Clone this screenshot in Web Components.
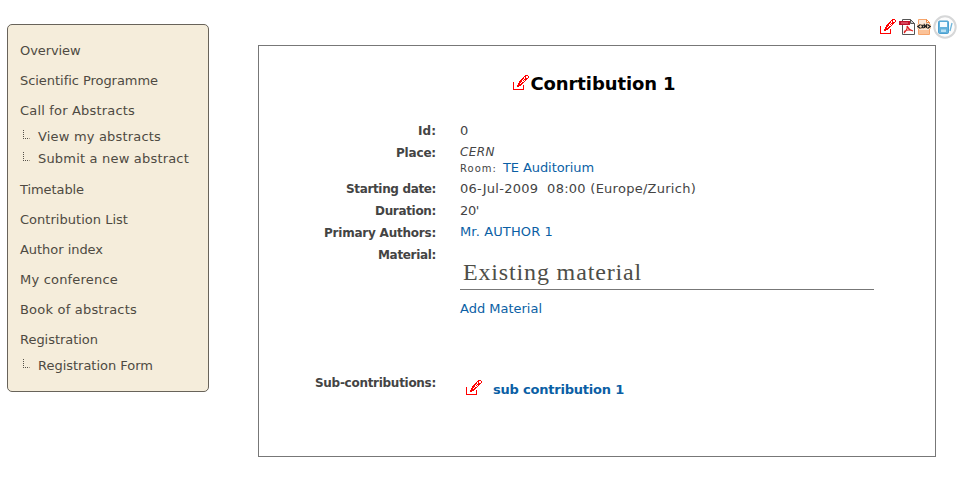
<!DOCTYPE html>
<html lang="en"><head><meta charset="utf-8"><title>Contribution</title>
<style>
html,body{margin:0;background:#fff}
body{width:962px;height:481px;overflow:hidden;font-family:"DejaVu Sans",sans-serif;font-size:13px;color:#444}
</style></head><body>
<conference-page></conference-page>
<script>
const define = (name, html, init) => customElements.define(name, class extends HTMLElement {
  connectedCallback() {
    if (this.shadowRoot) return;
    this.attachShadow({mode: 'open'}).innerHTML = html;
    if (init) init(this, this.shadowRoot);
  }
});

/* Text run whose letter spacing is adjusted to span a given width. */
define('fit-text', `<style>:host{display:inline-block;white-space:pre;font-variant-ligatures:none}span{display:inline-block}</style><span><slot></slot></span>`, (el, root) => {
  const s = root.querySelector('span'), w = +el.getAttribute('w'), n = el.textContent.length;
  s.style.letterSpacing = (w - s.getBoundingClientRect().width) / n + 'px';
});

define('edit-icon', `<style>:host{display:inline-block;width:16px;height:16px}svg{display:block}</style>
<svg width="16" height="16" viewBox="0 0 16 16" shape-rendering="crispEdges" fill="#f00">
<path d="M0 7h1v8H0zM0 14h11v1H0zM10 10h1v5h-1z"/>
<path d="M12 0h3v1h-3zM11 1h2v1h-2zM15 1h1v2h-1zM10 2h1v1h-1zM12 2h1v1h-1zM9 3h2v1H9zM12 3h3v1h-3zM8 4h2v1H8zM11 4h3v1h-3zM7 5h2v1H7zM10 5h1v1h-1zM12 5h1v1h-1zM6 6h3v1H6zM11 6h1v1h-1zM6 7h2v1H6zM9 7h2v1H9zM5 8h2v1H5zM8 8h2v1H8zM5 9h4v1H5zM4 10h4v1H4zM4 11h2v1H4z"/></svg>`);

define('pdf-icon', `<style>:host{display:block;width:16px;height:16px}svg{display:block}</style>
<svg width="16" height="16" viewBox="0 0 16 16">
<path d="M3.500.5h8l4 4v11h-12z" fill="#fff" stroke="#555"/><path d="M11.500.5v4h4z" fill="#ccc" stroke="#555"/>
<path d="M0 2h11v4H0z" fill="#c1122c"/><path d="M2 4h7" stroke="#ee7d8a"/>
<path d="M8 7c1 2 2 4 6 5M8 7c1 3-1 5-3 7M5 12.500c2-1.500 5-2 9-.8" fill="none" stroke="#d22" stroke-width="1.200"/></svg>`);

define('xml-icon', `<style>:host{display:block;width:14px;height:16px}svg{display:block}</style>
<svg width="14" height="16" viewBox="0 0 14 16">
<path d="M1.500.5h8l3 3v12h-11z" fill="#fdeadb" stroke="#f6a46b"/><path d="M9.500.5v3h3z" fill="#fff" stroke="#f08a45"/>
<path d="M2 11h10v4H2z" fill="#fbc298"/><path d="M0 5h14v5H0z" fill="#fbd7b8"/>
<path d="M3.500 5.500L.8 7.500l2.700 2M10.500 5.500l2.700 2-2.700 2M4.500 5.800l2 3.400M6.500 5.800l-2 3.400M7.500 9V6l1 1.500 1-1.500v3" fill="none" stroke="#222" stroke-width="1.200"/></svg>`);

define('calendar-icon', `<style>:host{display:block;width:24px;height:24px}svg{display:block}</style>
<svg width="24" height="24" viewBox="0 0 24 24">
<circle cx="12" cy="12" r="10.700" fill="#fcfcfc" stroke="#d6d7d8" stroke-width="2"/>
<rect x="5.500" y="6" width="10" height="12.500" rx="1.200" fill="#64b2dc" stroke="#4a9fcf"/>
<path d="M7 7h7v5H7z" fill="#f4fbff"/><path d="M8 14.500h5v2.500H8z" fill="#b8e0f3"/>
<path d="M19 8l-2 8" stroke="#70b6db" stroke-width="1.300"/></svg>`);

define('menu-item', `<style>
:host{display:flex;height:30px;align-items:center;padding-left:12px;box-sizing:border-box}
:host([sub]){height:22px}
svg{display:none;width:8px;height:9px;margin:0 7px 3px 3px}
:host([sub]) svg{display:block}
</style><svg viewBox="0 0 8 9" shape-rendering="crispEdges" fill="#555149"><path d="M0 0h1v1H0zM0 2h1v1H0zM0 4h1v1H0zM0 6h1v1H0zM0 8h1v1H0zM2 8h1v1H2zM4 8h1v1H4z"/><path d="M6 8h1v1H6z" fill="#aaa08c"/></svg><slot></slot>`);

define('side-menu', `<style>
:host{display:block;box-sizing:border-box;width:202px;height:368px;border:1px solid #68635a;border-radius:5px;background:#f5eddb;color:#4e4a42;padding-top:10px}
.gap{height:5px}
</style>
<menu-item><fit-text w="60.5">Overview</fit-text></menu-item>
<menu-item><fit-text w="138">Scientific Programme</fit-text></menu-item>
<menu-item><fit-text w="115">Call for Abstracts</fit-text></menu-item>
<menu-item sub><fit-text w="123">View my abstracts</fit-text></menu-item>
<menu-item sub><fit-text w="151">Submit a new abstract</fit-text></menu-item>
<div class="gap"></div>
<menu-item><fit-text w="64">Timetable</fit-text></menu-item>
<menu-item><fit-text w="108">Contribution List</fit-text></menu-item>
<menu-item><fit-text w="83">Author index</fit-text></menu-item>
<menu-item><fit-text w="98">My conference</fit-text></menu-item>
<menu-item><fit-text w="117">Book of abstracts</fit-text></menu-item>
<menu-item><fit-text w="78">Registration</fit-text></menu-item>
<menu-item sub><fit-text w="115">Registration Form</fit-text></menu-item>`);

define('detail-row', `<style>
:host{display:grid;grid-template-columns:177px 1fr;column-gap:24px;line-height:16px;min-height:22px}
.label{text-align:right;font-weight:bold;font-size:12px}
</style><div class="label"><slot name="label"></slot></div><div><slot></slot></div>`);

define('contribution-panel', `<style>
:host{display:block;box-sizing:border-box;width:678px;height:412px;border:1px solid #777}
h1{display:flex;justify-content:center;align-items:center;margin:27px 6px 0 0;height:22px;font-size:18px;line-height:22px;color:#000;gap:2px}
h1 edit-icon{margin-top:-2px}
.rows{margin-top:28px}
a{color:#0b5fa5}
.place{min-height:36px}.place i{display:block;font-size:12px;margin-top:-1px}.place div{display:flex;gap:6px;align-items:baseline}
small{font-size:10px}
.author{display:block;margin-top:-1px}
h2{font:24px/29px "Liberation Serif",serif;margin:11px 61px 0 0;padding:0 0 2px 3px;height:29px;border-bottom:1px solid #777;color:#4e4e48}
.add{margin-top:11px}
.material{height:128px}.subs{display:flex;align-items:center;gap:11px;padding:7px 0 0 6px;font-weight:bold}
.subs edit-icon{margin-top:-5px}
</style>
<h1><edit-icon></edit-icon><fit-text w="145">Conrtibution 1</fit-text></h1>
<div class="rows">
<detail-row><fit-text slot="label" w="18">Id:</fit-text>0</detail-row>
<detail-row class="place"><fit-text slot="label" w="40">Place:</fit-text><i><fit-text w="35">CERN</fit-text></i><div><small><fit-text w="37">Room:</fit-text></small><a><fit-text w="91">TE Auditorium</fit-text></a></div></detail-row>
<detail-row><fit-text slot="label" w="90">Starting date:</fit-text><fit-text w="236">06-Jul-2009  08:00 (Europe/Zurich)</fit-text></detail-row>
<detail-row><fit-text slot="label" w="61">Duration:</fit-text><fit-text w="19">20'</fit-text></detail-row>
<detail-row><fit-text slot="label" w="112">Primary Authors:</fit-text><a class="author"><fit-text w="93">Mr. AUTHOR 1</fit-text></a></detail-row>
<detail-row class="material"><fit-text slot="label" w="58">Material:</fit-text><h2><fit-text w="179">Existing material</fit-text></h2><div class="add"><a><fit-text w="82">Add Material</fit-text></a></div></detail-row>
<detail-row><fit-text slot="label" w="121">Sub-contributions:</fit-text><div class="subs"><edit-icon></edit-icon><a><fit-text w="131">sub contribution 1</fit-text></a></div></detail-row>
</div>`);

define('page-tools', `<style>:host{display:flex;height:24px;align-items:center;justify-content:flex-end;gap:2px}
edit-icon{margin-right:1px}</style>
<edit-icon></edit-icon><pdf-icon></pdf-icon><xml-icon></xml-icon><calendar-icon></calendar-icon>`);

define('conference-page', `<style>
:host{display:grid;grid-template-columns:202px 678px;column-gap:49px;padding-left:7px;align-items:start}
side-menu{margin-top:24px}
page-tools{margin:15px -21px 6px 0}
</style><side-menu></side-menu><main><page-tools></page-tools><contribution-panel></contribution-panel></main>`);
</script></body></html>
